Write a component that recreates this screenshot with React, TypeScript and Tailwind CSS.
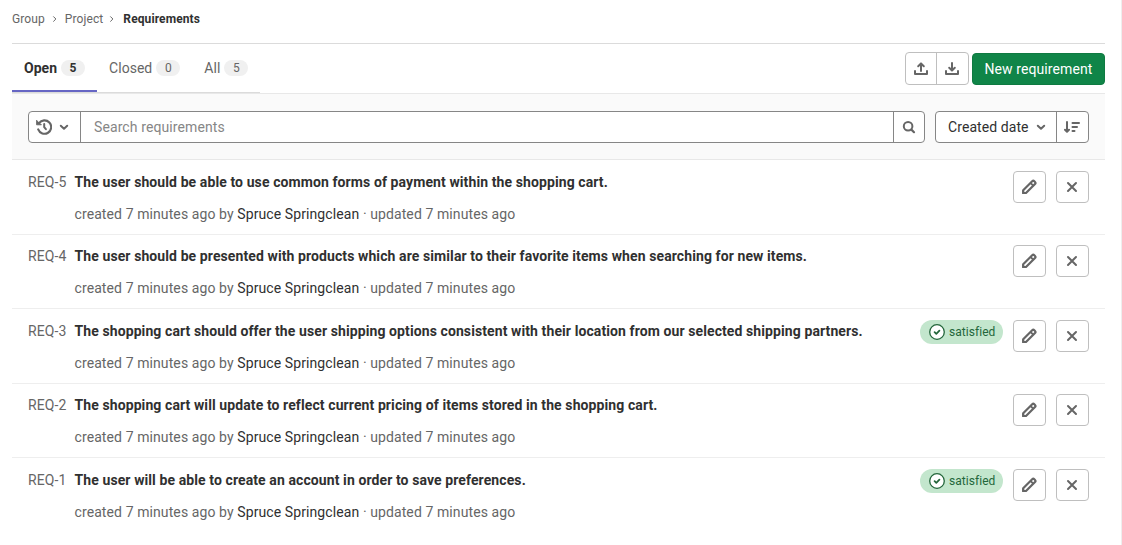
import type { ReactNode } from "react";

type Requirement = { id: number; title: string; satisfied?: boolean };

const requirements: Requirement[] = [
  { id: 5, title: "The user should be able to use common forms of payment within the shopping cart." },
  { id: 4, title: "The user should be presented with products which are similar to their favorite items when searching for new items." },
  { id: 3, title: "The shopping cart should offer the user shipping options consistent with their location from our selected shipping partners.", satisfied: true },
  { id: 2, title: "The shopping cart will update to reflect current pricing of items stored in the shopping cart." },
  { id: 1, title: "The user will be able to create an account in order to save preferences.", satisfied: true },
];

function Icon({ children, className = "size-4" }: { children: ReactNode; className?: string }) {
  return (
    <svg viewBox="0 0 16 16" fill="none" stroke="currentColor" strokeWidth="2" className={`block shrink-0 ${className}`}>
      {children}
    </svg>
  );
}

const ChevronDown = () => (
  <Icon>
    <path d="M4.8 6.8 8 9.8l3.2-3" strokeLinecap="round" strokeLinejoin="round" />
  </Icon>
);

const ChevronRight = () => (
  <Icon className="size-2">
    <path d="m5.2 3.4 4.6 4.6-4.6 4.6" strokeWidth="2" strokeLinecap="round" strokeLinejoin="round" />
  </Icon>
);

const History = () => (
  <Icon>
    <path d="M3 4.2A6.7 6.7 0 1 1 2.2 10.4" strokeWidth="2.1" strokeLinecap="round" />
    <path d="M.6 1.2v4.6h4.8L4.2 4.6 2 3z" fill="currentColor" stroke="currentColor" strokeWidth=".9" strokeLinejoin="round" />
    <path d="M8.2 5V8.2l1.7 2" strokeLinecap="round" strokeLinejoin="round" />
  </Icon>
);

const Upload = () => (
  <Icon>
    <path d="M8 10V2.6M5.2 5.2 8 2.4l2.8 2.8" strokeLinecap="round" strokeLinejoin="round" />
    <path d="M2 10v3.1h12V10" strokeLinecap="round" strokeLinejoin="round" />
  </Icon>
);

const Download = () => (
  <Icon>
    <path d="M8 2v7.4M5.2 6.8 8 9.6l2.8-2.8" strokeLinecap="round" strokeLinejoin="round" />
    <path d="M2 10v3.1h12V10" strokeLinecap="round" strokeLinejoin="round" />
  </Icon>
);

const Search = () => (
  <Icon>
    <circle cx="7.1" cy="7.3" r="4.3" />
    <path d="m10.4 10.6 2.6 2.6" strokeWidth="2.2" strokeLinecap="round" />
  </Icon>
);

const SortDescending = () => (
  <Icon>
    <path d="M3 3v9.2M1 10.8l2 2 2-2" strokeLinecap="round" strokeLinejoin="round" />
    <path d="M8.5 4H15M8.5 8H13M8.5 12h2" strokeLinecap="round" />
  </Icon>
);

const Pencil = () => (
  <Icon>
    <path d="M2.2 14v-2.7l9-9a1.5 1.5 0 0 1 2.1 0l.7.7a1.5 1.5 0 0 1 0 2.1L5 14z" strokeWidth="2.2" strokeLinejoin="round" />
    <path d="m9.6 4 2.6 2.6" strokeWidth="1.8" />
    <path d="M1.2 11v4h4z" fill="currentColor" stroke="none" />
  </Icon>
);

const Close = () => (
  <Icon>
    <path d="m4 4 8 8M12 4l-8 8" strokeLinecap="round" />
  </Icon>
);

const StatusPassed = () => (
  <Icon>
    <circle cx="8" cy="8" r="7.3" strokeWidth="1.3" fill="#fff" />
    <path d="m5.6 8.2 1.7 1.6 3.1-3.1" strokeWidth="1.8" strokeLinecap="round" strokeLinejoin="round" />
  </Icon>
);

function Tab({ label, count, active = false }: { label: string; count: number; active?: boolean }) {
  return (
    <button
      className={`flex h-12 items-center gap-1 border-b-2 px-3 pt-0.5 tracking-[0.03px] ${
        active ? "border-[#6666c4] font-bold text-[#303030]" : "border-transparent text-[#666]"
      }`}
    >
      <span>{label}</span>
      <span className="flex h-4 w-6 items-center justify-center rounded-full bg-[#f0f0f0] text-xs">{count}</span>
    </button>
  );
}

function ActionButton({ label, children }: { label: string; children: ReactNode }) {
  return (
    <button aria-label={label} className="flex h-8 w-[33px] items-center rounded border border-[#bfbfbf] pl-[7px] text-[#666]">
      {children}
    </button>
  );
}

function RequirementRow({ id, title, satisfied }: Requirement) {
  return (
    <li className="flex h-[74.5px] items-start border-b border-[#eee] px-4 pt-[10.9px] tracking-[0.097px] last:border-b-0">
      <span className="w-[46.5px] shrink-0 leading-[22px] text-[#666]">REQ-{id}</span>
      <div className="min-w-0 grow">
        <p className="leading-[22px] font-bold whitespace-nowrap text-[#303030]">{title}</p>
        <p className="mt-2.5 leading-[22px] whitespace-nowrap text-[#666]">
          created 7 minutes ago by <span className="text-[#303030]">Spruce Springclean</span> · updated 7 minutes ago
        </p>
      </div>
      {satisfied && (
        <span className="mr-2.5 flex h-6 w-[83px] shrink-0 items-center gap-1 rounded-full bg-[#c3e6cd] pl-[9px] text-xs tracking-[0.05px] text-[#24663b]">
          <StatusPassed />
          satisfied
        </span>
      )}
      <div className="flex shrink-0 gap-2.5">
        <ActionButton label="Edit"><Pencil /></ActionButton>
        <ActionButton label="Archive"><Close /></ActionButton>
      </div>
    </li>
  );
}

export default function App() {
  return (
    <div className="h-[545px] overflow-hidden border-r border-[#eee] bg-white pr-4 pl-3 font-[Roboto,sans-serif] text-sm">
      <nav className="flex h-11 items-center border-b border-[#dbdbdb] pb-[5px] text-xs tracking-[0.1px] text-[#666]">
        <span>Group</span>
        <span className="mx-[6px]"><ChevronRight /></span>
        <span>Project</span>
        <span className="mr-[7px] ml-[5px]"><ChevronRight /></span>
        <span className="font-bold text-[#303030]">Requirements</span>
      </nav>

      <header className="flex h-[49px] items-start justify-between">
        <div className="flex w-[248px] border-b border-[#dbdbdb]">
          <Tab label="Open" count={5} active />
          <Tab label="Closed" count={0} />
          <Tab label="All" count={5} />
        </div>
        <div className="mt-2 flex gap-[3px]">
          <div className="flex h-[33px] w-16 divide-x divide-[#bfbfbf] rounded border border-[#bfbfbf] text-[#666]">
            <button aria-label="Import" className="flex w-[31px] items-center pl-[7px]"><Upload /></button>
            <button aria-label="Export" className="flex grow items-center pl-[7px]"><Download /></button>
          </div>
          <button className="mt-px h-8 w-[133px] rounded border border-[#0f7a41] bg-[#108548] tracking-[0.1px] text-white">New requirement</button>
        </div>
      </header>

      <div className="flex h-[67px] items-center gap-2.5 border-y border-[#e8e8e8] bg-[#fafafa] px-4">
        <div className="flex h-8 grow divide-x divide-[#868686] rounded border border-[#868686] bg-white text-[#666]">
          <button aria-label="Recent searches" className="flex w-[52px] items-center gap-1 pl-[7px]"><History /><ChevronDown /></button>
          <input aria-label="Search" placeholder="Search requirements" className="min-w-0 grow px-[13px] tracking-[0.1px] outline-none placeholder:text-[#868686]" />
          <button aria-label="Submit search" className="flex w-[30px] items-center pl-[7px]"><Search /></button>
        </div>
        <div className="flex h-8 w-[154px] divide-x divide-[#868686] rounded border border-[#868686] bg-white text-[#666]">
          <button className="flex w-[121px] items-center gap-1 pl-3 text-[#303030]">
            <span className="w-[81px] text-left whitespace-nowrap tracking-[0.08px]">Created date</span>
            <span className="text-[#666]"><ChevronDown /></span>
          </button>
          <button aria-label="Sort direction" className="flex grow items-center pl-[7px]"><SortDescending /></button>
        </div>
      </div>

      <ul>
        {requirements.map((item) => <RequirementRow key={item.id} {...item} />)}
      </ul>
    </div>
  );
}
